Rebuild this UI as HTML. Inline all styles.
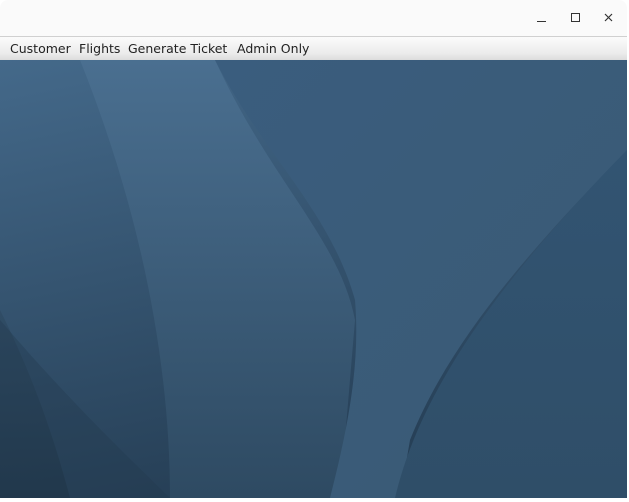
<!DOCTYPE html>
<html><head><style>
html,body{margin:0;padding:0;width:629px;height:498px;overflow:hidden;background:#fff;font-family:"DejaVu Sans","Liberation Sans",sans-serif;}
#title{position:absolute;left:0;top:0;width:627px;height:36px;background:#fafafa;border-top-left-radius:8px;border-top-right-radius:8px;border-bottom:1px solid #d0d0d0;}
#menu{position:absolute;left:0;top:37px;width:627px;height:23px;background:linear-gradient(#fbfbfb,#ececec 70%,#dcdcdc);font-size:12.5px;color:#222;}
#menu span{position:absolute;top:4px;white-space:nowrap;}
#content{position:absolute;left:0;top:60px;width:627px;height:438px;}
</style></head><body>
<div id="title">
<svg width="627" height="36" style="position:absolute;left:0;top:0">
<line x1="537" y1="21.5" x2="546" y2="21.5" stroke="#333" stroke-width="1"/>
<rect x="571.5" y="13.5" width="8" height="8" fill="none" stroke="#333" stroke-width="1"/>
<path d="M605 14 L612 21 M612 14 L605 21" stroke="#333" stroke-width="1.2"/>
</svg>
</div>
<div id="menu">
<span style="left:10px">Customer</span>
<span style="left:79px">Flights</span>
<span style="left:128px">Generate Ticket</span>
<span style="left:237px">Admin Only</span>
</div>
<div id="content">
<svg width="627" height="438" viewBox="0 0 627 438">
<defs>
<linearGradient id="g0" x1="0" y1="0" x2="0.3" y2="1"><stop offset="0" stop-color="#44698a"/><stop offset="1" stop-color="#263f56"/></linearGradient>
<linearGradient id="g1" x1="0" y1="0" x2="0" y2="1"><stop offset="0" stop-color="#4a6f90"/><stop offset="1" stop-color="#2e4a62"/></linearGradient>
<linearGradient id="g2" x1="0" y1="0" x2="1" y2="1"><stop offset="0" stop-color="#3a5d7e"/><stop offset="1" stop-color="#3a5a74"/></linearGradient>
<linearGradient id="g3" x1="0" y1="0" x2="0" y2="1"><stop offset="0" stop-color="#325472"/><stop offset="1" stop-color="#2f4e68"/></linearGradient>
<linearGradient id="g4" x1="0" y1="0" x2="0" y2="1"><stop offset="0" stop-color="#2e4a62"/><stop offset="1" stop-color="#1f3446"/></linearGradient>
</defs>
<rect width="627" height="438" fill="url(#g0)"/>
<path d="M80 0 L215 0 C270 120 340 180 355 260 L340 438 L170 438 C170 300 140 150 80 0Z" fill="url(#g1)"/>
<path d="M215 0 L627 0 L627 90 C530 190 450 280 410 380 L400 438 L330 438 C350 360 360 300 355 240 C330 150 260 90 215 0Z" fill="url(#g2)"/>
<path d="M627 90 L627 438 L395 438 C420 330 500 220 627 90Z" fill="url(#g3)"/>
<path d="M0 250 C40 330 60 400 70 438 L0 438Z" fill="url(#g4)" opacity="0.7"/>
<path d="M0 260 C60 330 110 380 170 438 L0 438Z" fill="#233a4e" opacity="0.35"/>
</svg>
</div>
<div style="position:absolute;left:627px;top:0;width:2px;height:498px;background:#fff"></div>
</body></html>
